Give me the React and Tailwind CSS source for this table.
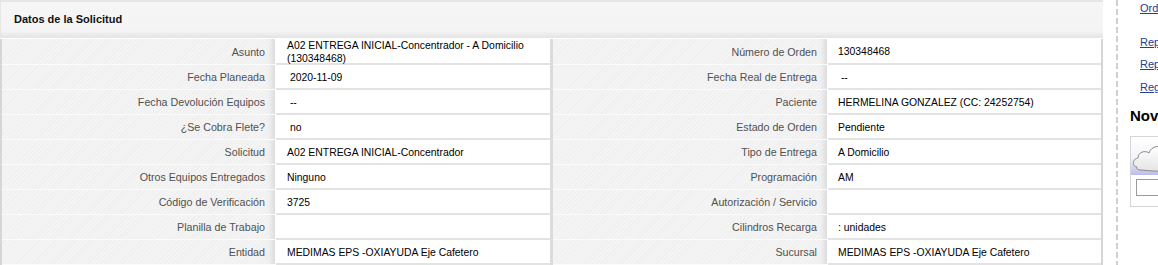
import React from "react";

const rows = [
  ["Asunto", <>A02 ENTREGA INICIAL-Concentrador - A Domicilio<br />(130348468)</>, "Número de Orden", "130348468"],
  ["Fecha Planeada", " 2020-11-09", "Fecha Real de Entrega", " --"],
  ["Fecha Devolución Equipos", " --", "Paciente", "HERMELINA GONZALEZ (CC: 24252754)"],
  ["¿Se Cobra Flete?", " no", "Estado de Orden", "Pendiente"],
  ["Solicitud", "A02 ENTREGA INICIAL-Concentrador", "Tipo de Entrega", "A Domicilio"],
  ["Otros Equipos Entregados", "Ninguno", "Programación", "AM"],
  ["Código de Verificación", "3725", "Autorización / Servicio", ""],
  ["Planilla de Trabajo", "", "Cilindros Recarga", ": unidades"],
  ["Entidad", "MEDIMAS EPS -OXIAYUDA Eje Cafetero", "Sucursal", "MEDIMAS EPS -OXIAYUDA Eje Cafetero"],
];

function Label({ children, w }) {
  return (
    <div
      className={`${w} h-full flex items-center justify-end pr-[10px] pt-px text-[10.7px] text-[#505050] border-b border-[#fbfbfb] bg-[repeating-linear-gradient(135deg,#f4f4f4_0px,#f4f4f4_2px,#efefef_2px,#efefef_3px)] shadow-[inset_-9px_0_7px_-7px_rgba(0,0,0,0.13)]`}
    >
      {children}
    </div>
  );
}

function Value({ children, w, extra = "" }) {
  return (
    <div className={`${w} h-full flex items-center pl-[10px] pt-px text-[10.4px] text-black whitespace-pre border-b-2 border-[#e3e3e3] bg-white ${extra}`}>
      <div className="leading-[13px]">{children}</div>
    </div>
  );
}

export default function App() {
  return (
    <div className="flex w-[1158px] h-[265px] overflow-hidden bg-white font-['Liberation_Sans',Arial,sans-serif] text-[11px]">
      <div className="w-[1103px] shrink-0 flex flex-col">
        {/* panel title */}
        <div className="h-[38px] shrink-0 border-t-2 border-[#d9d9d9] border-l border-[#e6e6e6] bg-[linear-gradient(#f6f6f6_0%,#f4f4f4_80%,#e4e4e4_100%)] flex items-center pl-[13px] pb-[2px]">
          <span className="font-bold text-[11px] text-[#111]">Datos de la Solicitud</span>
        </div>
        <div className="mt-px flex flex-col border-l-2 border-r-2 border-[#d6d6d6]">
          {rows.map(([l1, v1, l2, v2], i) => (
            <div key={l1} className={`flex ${i === 0 ? "h-[26px]" : "h-[25px]"}`}>
              <Label w="w-[273px]">{l1}</Label>
              <div className="w-px bg-white" />
              <Value w="w-[274px]" extra="pl-[11px]">{v1}</Value>
              <div className="w-[3px] bg-[#dcdcdc]" />
              <Label w="w-[274px]">{l2}</Label>
              <div className="w-px bg-white" />
              <Value w="w-[273px]">{v2}</Value>
            </div>
          ))}
        </div>
      </div>

      {/* right column */}
      <aside className="flex-1 flex min-w-0">
        <div className="ml-[13px] w-[2px] shrink-0 bg-[repeating-linear-gradient(to_bottom,#cfcfcf_0px,#cfcfcf_6px,transparent_6px,transparent_9px)]" />
        <div className="flex-1 min-w-0 pl-[12px] whitespace-nowrap overflow-hidden">
          <div className="pl-[10px] text-[11px] leading-[13px] text-[#23408e]">
            <a className="block underline mt-[2px]">Ordenes de Servicio</a>
            <a className="block underline mt-[21px]">Reporte de Entregas</a>
            <a className="block underline mt-[9px]">Reporte de Novedades</a>
            <a className="block underline mt-[10px]">Registro de Visitas</a>
          </div>
          <h3 className="mt-[13px] font-bold text-[15px] leading-[18px] text-black">Novedades</h3>
          <div className="mt-[11px] h-[71px] w-[60px] border border-r-0 border-[#d6d6d6] pt-[2px]">
            <svg width="60" height="36" viewBox="0 0 60 36">
              <defs>
                <linearGradient id="sky" x1="0" y1="0" x2="0" y2="1">
                  <stop offset="0" stopColor="#ffffff" />
                  <stop offset="0.55" stopColor="#f2f2fb" />
                  <stop offset="1" stopColor="#bcbceb" />
                </linearGradient>
                <linearGradient id="cloud" x1="0" y1="0" x2="0" y2="1">
                  <stop offset="0" stopColor="#ffffff" />
                  <stop offset="1" stopColor="#e4e4e4" />
                </linearGradient>
              </defs>
              <rect x="0" y="0" width="60" height="36" fill="url(#sky)" />
              <path
                d="M6 28 C1 28 1 20 7 19 C7 13 14 11 18 14 C20 7 30 5 34 11 C37 8 44 9 45 13 L60 13 L60 31 C50 33 30 33 10 31 C7 31 5 30 6 28 Z"
                fill="url(#cloud)"
                stroke="#8a8a8a"
                strokeWidth="1"
              />
            </svg>
            <div className="mt-[4px] ml-[5px] h-[17px] w-[60px] border border-r-0 border-[#9a9a9a] bg-white" />
          </div>
        </div>
      </aside>
    </div>
  );
}
